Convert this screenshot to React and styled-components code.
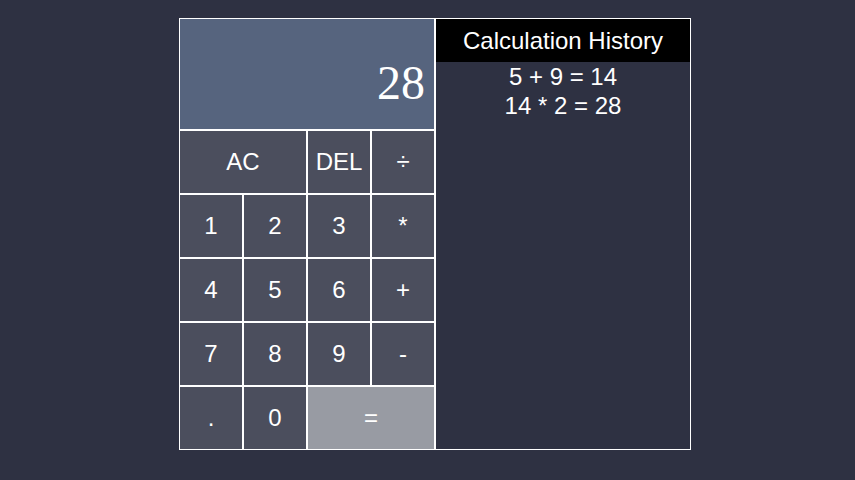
import React, { useState } from "react";
import styled, { createGlobalStyle } from "styled-components";

const GlobalStyle = createGlobalStyle`
  html, body {
    margin: 0;
    padding: 0;
    background: #2e3142;
  }
  body {
    font-family: "Liberation Sans", Arial, sans-serif;
    color: #fff;
  }
`;

const Page = styled.div`
  display: flex;
  align-items: flex-start;
  padding: 18px 0 0 179px;
  min-height: 100vh;
  box-sizing: border-box;
`;

const Calculator = styled.div`
  display: grid;
  grid-template-columns: repeat(4, 64px);
  grid-template-rows: 112px repeat(5, 64px);
`;

const Display = styled.div`
  grid-column: 1 / -1;
  display: flex;
  align-items: flex-end;
  justify-content: flex-end;
  box-sizing: border-box;
  padding: 0 9px 19px 0;
  background: #56647e;
  border: 1px solid #fff;
  font-family: "Liberation Serif", "Times New Roman", serif;
  font-size: 48px;
  color: #fff;
`;

const Key = styled.button`
  grid-column: span ${(p) => p.$span || 1};
  box-sizing: border-box;
  border: 1px solid #fff;
  margin: 0;
  padding: 0;
  background: ${(p) => (p.$accent ? "#989ba3" : "#4b4e5d")};
  color: #fff;
  font-family: "Liberation Sans", Arial, sans-serif;
  font-size: 24px;
  cursor: pointer;
  outline: none;

  &:hover {
    filter: brightness(1.1);
  }
`;

const History = styled.div`
  width: 256px;
  height: 432px;
  box-sizing: border-box;
  border: 1px solid #fff;
  display: flex;
  flex-direction: column;
`;

const HistoryTitle = styled.div`
  background: #000;
  padding: 8px 0;
  text-align: center;
  font-size: 24px;
  line-height: 27px;
`;

const HistoryItem = styled.div`
  text-align: center;
  font-size: 24px;
  line-height: 28px;
  padding-top: 1px;
`;

const keys = [
  { label: "AC", span: 2 },
  { label: "DEL" },
  { label: "÷" },
  { label: "1" },
  { label: "2" },
  { label: "3" },
  { label: "*" },
  { label: "4" },
  { label: "5" },
  { label: "6" },
  { label: "+" },
  { label: "7" },
  { label: "8" },
  { label: "9" },
  { label: "-" },
  { label: "." },
  { label: "0" },
  { label: "=", span: 2, accent: true },
];

export default function App() {
  const [value] = useState("28");
  const history = ["5 + 9 = 14", "14 * 2 = 28"];

  return (
    <>
      <GlobalStyle />
      <Page>
        <Calculator>
          <Display>{value}</Display>
          {keys.map((k) => (
            <Key key={k.label} $span={k.span} $accent={k.accent}>
              {k.label}
            </Key>
          ))}
        </Calculator>
        <History>
          <HistoryTitle>Calculation History</HistoryTitle>
          {history.map((h) => (
            <HistoryItem key={h}>{h}</HistoryItem>
          ))}
        </History>
      </Page>
    </>
  );
}
